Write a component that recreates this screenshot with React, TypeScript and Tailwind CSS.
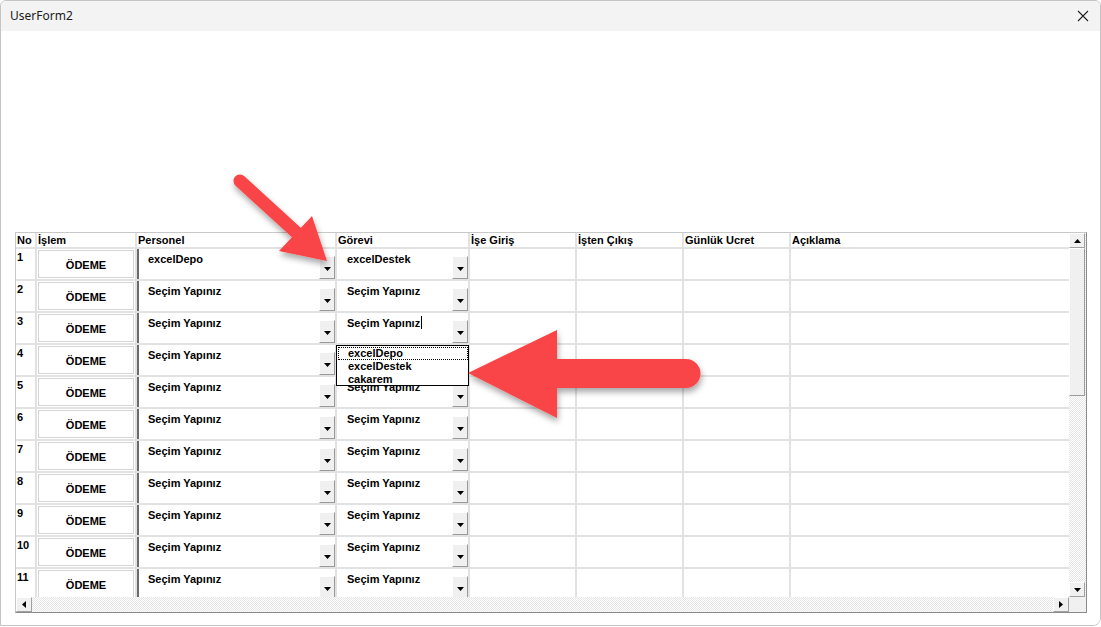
import React from 'react';

const FONT = "font-['Liberation_Sans',Arial,sans-serif]";

const headers = ['No', 'İşlem', 'Personel', 'Görevi', 'İşe Giriş', 'İşten Çıkış', 'Günlük Ucret', 'Açıklama'];

const rows = Array.from({ length: 11 }, (_, i) => ({
  no: i + 1,
  personel: i === 0 ? 'excelDepo' : 'Seçim Yapınız',
  // row 4's value sits under the open list, so nothing shows there
  gorevi: i === 0 ? 'excelDestek' : i === 3 ? '' : 'Seçim Yapınız',
}));

const DownTri = () => (
  <svg width="7" height="4" viewBox="0 0 7 4">
    <path d="M0 0h7L3.5 4z" fill="#000" />
  </svg>
);

const UpTri = () => (
  <svg width="7" height="4" viewBox="0 0 7 4">
    <path d="M0 4h7L3.5 0z" fill="#000" />
  </svg>
);

const ScrollBtn = ({ children }: { children: React.ReactNode }) => (
  <div className="w-[16px] h-[15px] bg-[#f0f0f0] border border-t-white border-l-white border-r-[#a0a0a0] border-b-[#a0a0a0] flex items-center justify-center">
    {children}
  </div>
);

const DropBtn = () => (
  <div className="self-end w-[16px] h-[23px] shrink-0 bg-[#f0f0f0] border border-t-white border-l-white border-r-[#9a9a9a] border-b-[#9a9a9a] flex items-center justify-center pt-[2px]">
    <DownTri />
  </div>
);

const Combo = ({ text, dark, caret }: { text: string; dark?: boolean; caret?: boolean }) => (
  <div className={`h-full bg-white flex ${dark ? 'border-l-2 border-[#6b6b6b]' : ''}`}>
    <div className={`flex-1 ${dark ? 'pl-[9px]' : 'pl-[10px]'} pt-[3px] text-[11px] leading-[14px] font-bold text-black whitespace-nowrap`}>
      {text}
      {caret && <span className="inline-block w-px h-[13px] bg-black align-top ml-px" />}
    </div>
    <DropBtn />
  </div>
);

const checker = 'bg-[repeating-conic-gradient(#e4e4e4_0%_25%,#ffffff_0%_50%)] bg-size-[2px_2px]';

export default function App() {
  return (
    <div className={`relative w-[1101px] h-[627px] bg-white overflow-hidden ${FONT}`}>
      <div className="w-full h-[626px] border border-[#c4c4c4] rounded-br-[8px] rounded-tr-[6px] rounded-tl-[6px] flex flex-col overflow-hidden">
        {/* title bar */}
        <div className="h-[30px] shrink-0 bg-[#f3f3f3] flex items-center justify-between pl-[9px] pr-[8px]">
          <span className="font-['Noto_Sans',sans-serif] text-[12px] text-[#1b1b1b]">UserForm2</span>
          <svg width="12" height="12" viewBox="0 0 12 12" className="mr-[3px]">
            <path d="M1 1l10 10M11 1L1 11" stroke="#222" strokeWidth="1.1" />
          </svg>
        </div>

        {/* body */}
        <div className="flex-1 bg-white pt-[201px] pl-[14px]">
          <div className="w-[1072px] border border-[#c8c8c8] border-r-[#8a8a8a] border-b-[#8a8a8a] flex flex-col">
            <div className="flex">
              {/* grid */}
              <div className="w-[1053px] h-[364px] overflow-hidden bg-[#e2e2e2]">
                <div className="grid grid-cols-[19px_98px_198px_131px_105px_105px_105px_278px] gap-x-[2px] gap-y-[2px] auto-rows-[30px] [grid-template-rows:14px]">
                  {headers.map((h) => (
                    <div key={h} className="bg-white h-[14px] text-[11px] leading-[14px] font-bold text-black pl-[1px] whitespace-nowrap">
                      {h}
                    </div>
                  ))}
                  {rows.map((r) => (
                    <React.Fragment key={r.no}>
                      <div className="bg-white text-[11px] leading-[12px] font-bold pl-[1px] pt-[2px]">{r.no}</div>
                      <div className="bg-white p-[1px]">
                        <div className="h-full border border-[#d6d6d6] flex items-center justify-center text-[11px] font-bold pt-[2px]">
                          ÖDEME
                        </div>
                      </div>
                      <Combo text={r.personel} dark />
                      <Combo text={r.gorevi} caret={r.no === 3} />
                      <div className="bg-white" />
                      <div className="bg-white" />
                      <div className="bg-white" />
                      <div className="bg-white" />
                    </React.Fragment>
                  ))}
                </div>
              </div>
              {/* vertical scrollbar */}
              <div className={`w-[17px] h-[364px] flex flex-col ${checker}`}>
                <ScrollBtn>
                  <UpTri />
                </ScrollBtn>
                <div className="w-[16px] h-[148px] bg-[#f0f0f0] border border-t-white border-l-white border-r-[#9a9a9a] border-b-[#9a9a9a]" />
                <div className="flex-1" />
                <ScrollBtn>
                  <DownTri />
                </ScrollBtn>
              </div>
            </div>
            {/* horizontal scrollbar */}
            <div className="flex h-[15px]">
              <div className={`w-[1053px] flex justify-between ${checker}`}>
                <div className="w-[16px] h-[15px] bg-[#f0f0f0] border border-t-white border-l-white border-r-[#a0a0a0] border-b-[#a0a0a0] flex items-center justify-center">
                  <svg width="4" height="7" viewBox="0 0 4 7">
                    <path d="M4 0v7L0 3.5z" fill="#000" />
                  </svg>
                </div>
                <div className="w-[16px] h-[15px] bg-[#f0f0f0] border border-t-white border-l-white border-r-[#a0a0a0] border-b-[#a0a0a0] flex items-center justify-center">
                  <svg width="4" height="7" viewBox="0 0 4 7">
                    <path d="M0 0v7L4 3.5z" fill="#000" />
                  </svg>
                </div>
              </div>
              <div className="w-[17px] bg-[#f0f0f0]" />
            </div>
          </div>
        </div>
      </div>

      {/* open dropdown list */}
      <div className="absolute left-[336px] top-[345px] w-[133px] h-[41px] bg-white border border-black pl-[1px] pt-[1px]">
        <div className="border border-dotted border-black h-[13px] pl-[9px] text-[11px] leading-[11px] font-bold">excelDepo</div>
        <div className="pl-[10px] text-[11px] leading-[13px] font-bold">excelDestek</div>
        <div className="pl-[10px] text-[11px] leading-[12px] font-bold">cakarem</div>
      </div>

      {/* annotation arrows */}
      <svg className="absolute left-0 top-0 pointer-events-none" width="1101" height="627" viewBox="0 0 1101 627">
        <defs>
          <filter id="sh" x="-20%" y="-20%" width="140%" height="160%">
            <feDropShadow dx="1" dy="4" stdDeviation="3" floodColor="#000" floodOpacity="0.35" />
          </filter>
        </defs>
        <g filter="url(#sh)" fill="#f94446">
          <path d="M240 181L298 234" stroke="#f94446" strokeWidth="13" strokeLinecap="round" />
          <path d="M327 261L279 251L312 216z" />
          <path d="M468 373L557 330L557 359L686 359A14.5 14.5 0 0 1 686 388L557 388L557 418z" />
        </g>
      </svg>
    </div>
  );
}
